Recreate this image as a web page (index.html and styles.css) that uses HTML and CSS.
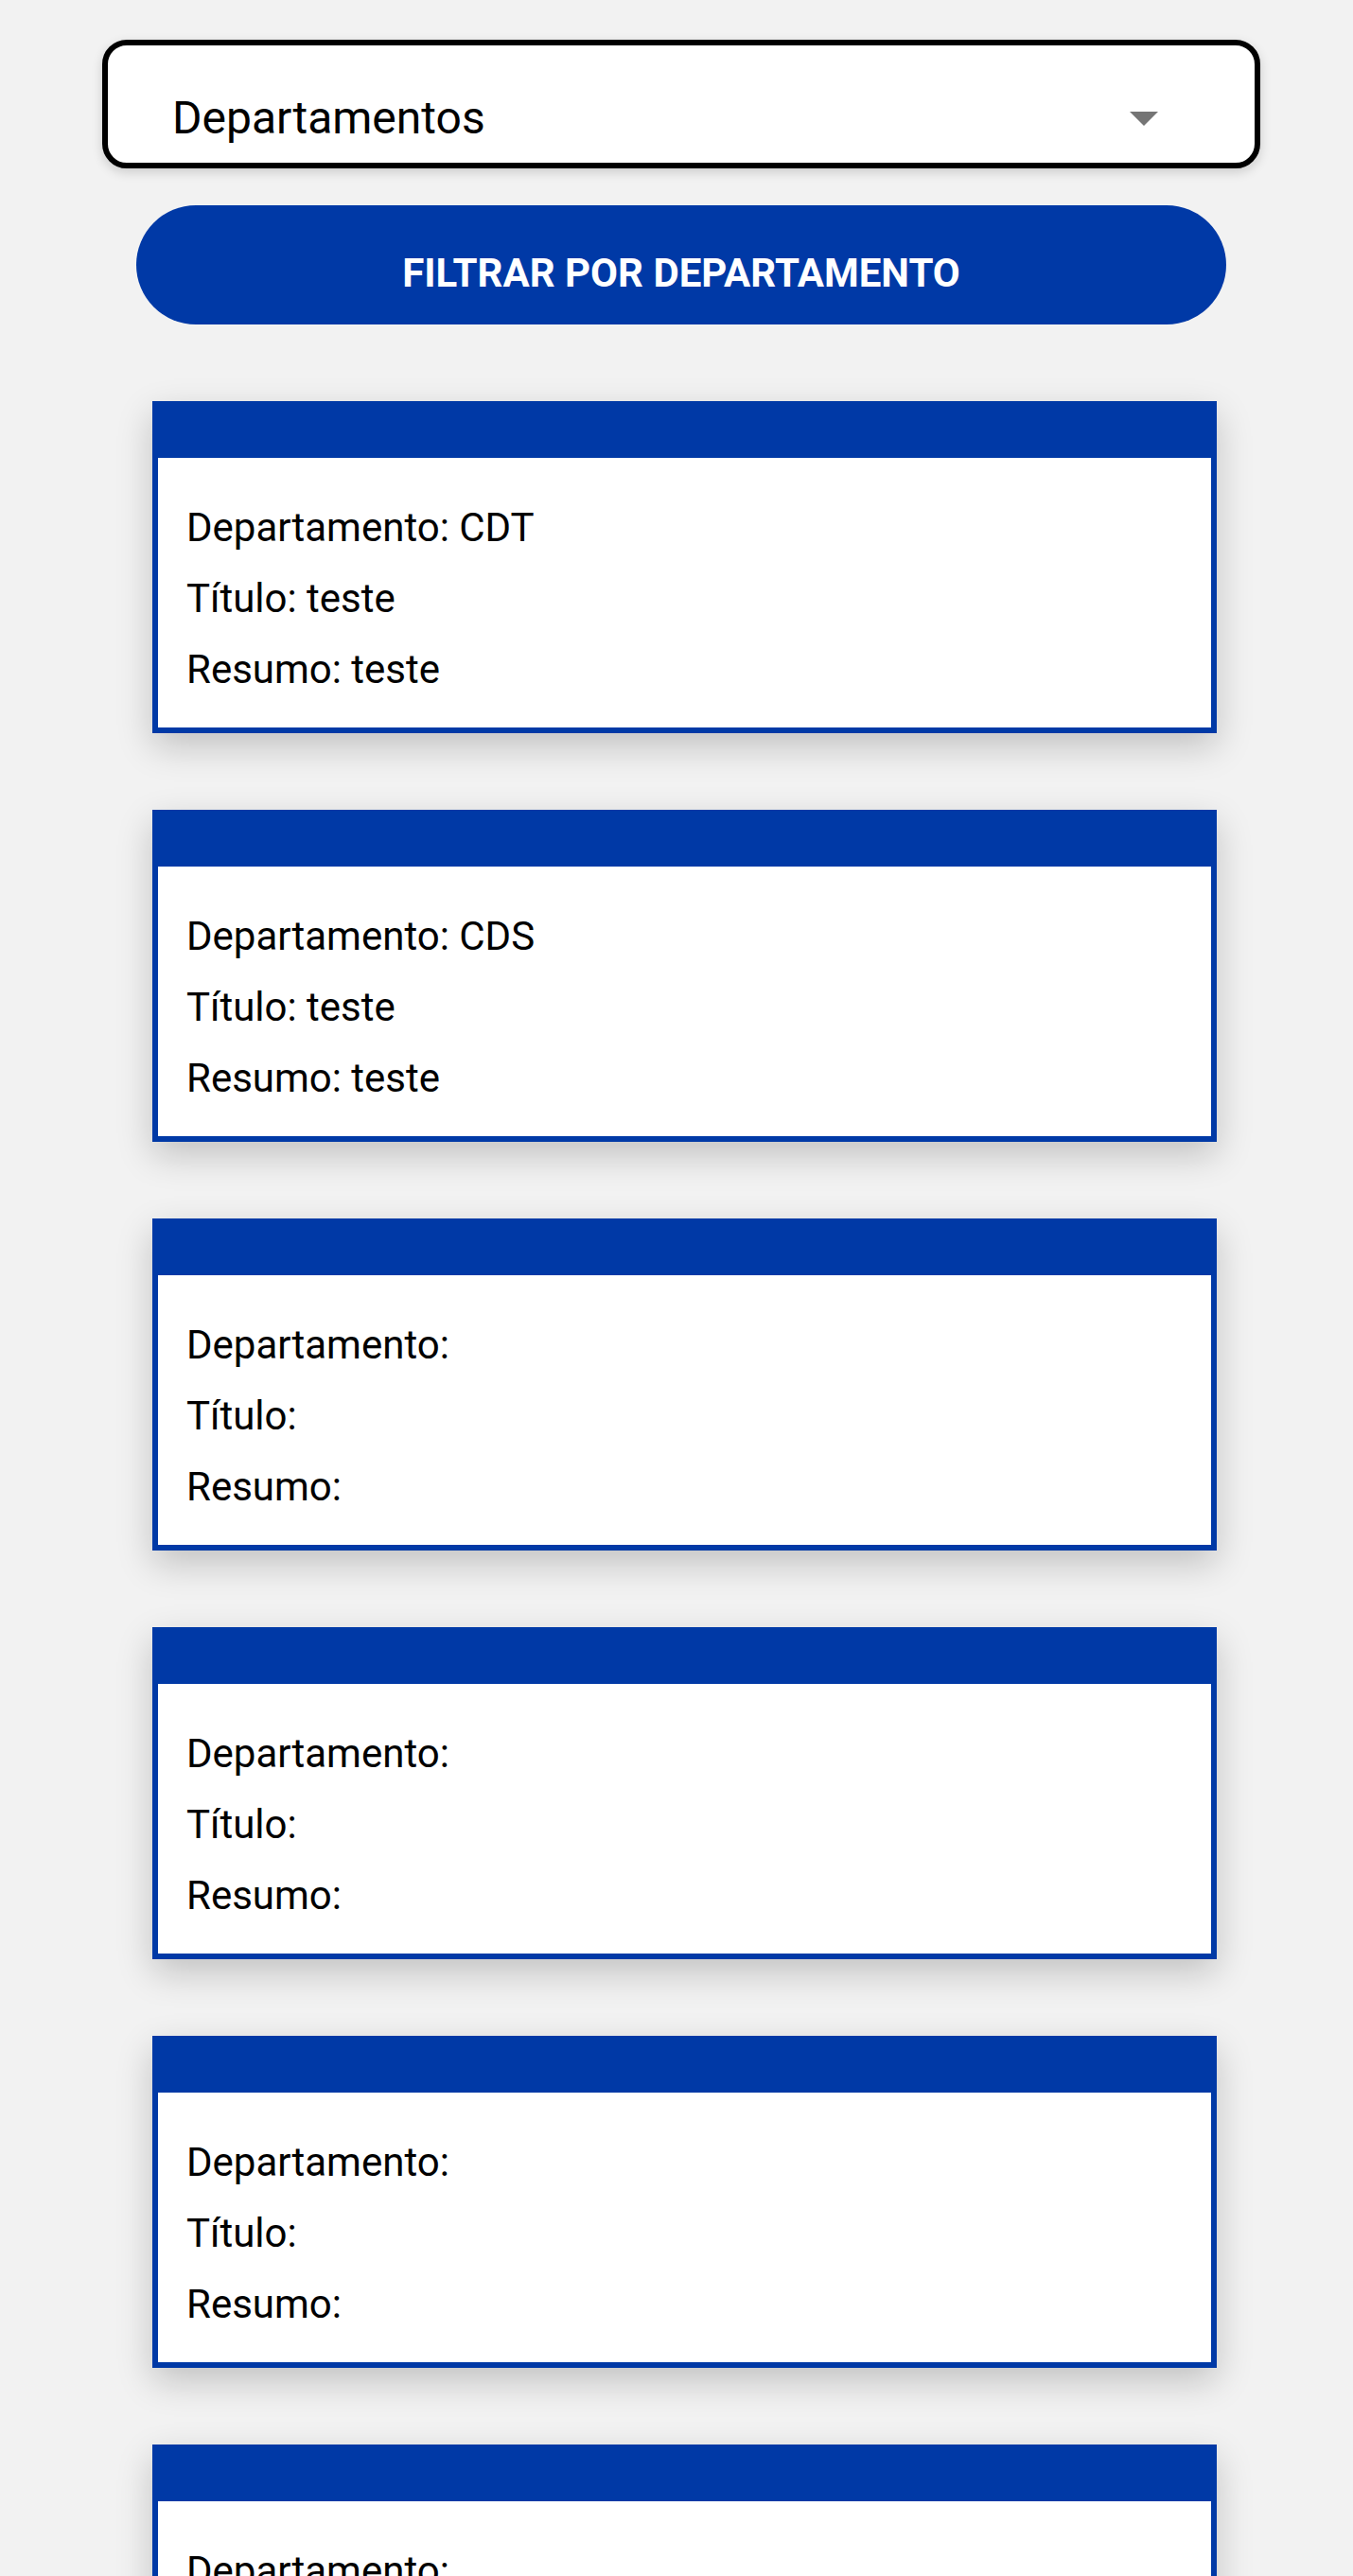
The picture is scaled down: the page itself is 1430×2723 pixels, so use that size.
FILE: index.html
```html
<!DOCTYPE html>
<html lang="pt-BR">
<head>
<meta charset="utf-8">
<title>Departamentos</title>
<link rel="stylesheet" href="styles.css">
</head>
<body>
<main class="page">
  <div class="select">
    <span class="select-label">Departamentos</span>
    <svg class="select-arrow" width="30" height="15" viewBox="0 0 30 15"><path d="M0 0 L30 0 L15 15 Z" fill="#757575"/></svg>
  </div>
  <button class="btn">FILTRAR POR DEPARTAMENTO</button>
  <section class="list">
    <article class="card">
      <div class="card-head"></div>
      <div class="card-body">
        <p>Departamento: CDT</p>
        <p>Título: teste</p>
        <p>Resumo: teste</p>
      </div>
    </article>
    <article class="card">
      <div class="card-head"></div>
      <div class="card-body">
        <p>Departamento: CDS</p>
        <p>Título: teste</p>
        <p>Resumo: teste</p>
      </div>
    </article>
    <article class="card">
      <div class="card-head"></div>
      <div class="card-body">
        <p>Departamento:</p>
        <p>Título:</p>
        <p>Resumo:</p>
      </div>
    </article>
    <article class="card">
      <div class="card-head"></div>
      <div class="card-body">
        <p>Departamento:</p>
        <p>Título:</p>
        <p>Resumo:</p>
      </div>
    </article>
    <article class="card">
      <div class="card-head"></div>
      <div class="card-body">
        <p>Departamento:</p>
        <p>Título:</p>
        <p>Resumo:</p>
      </div>
    </article>
    <article class="card">
      <div class="card-head"></div>
      <div class="card-body">
        <p>Departamento:</p>
        <p>Título:</p>
        <p>Resumo:</p>
      </div>
    </article>
  </section>
</main>
</body>
</html>
```

FILE: styles.css
```css
html, body {
  margin: 0;
  padding: 0;
  background: #f2f2f2;
}

body {
  font-family: Roboto, "Liberation Sans", sans-serif;
  color: #000;
}

.page {
  padding-top: 42px;
  padding-bottom: 60px;
}

.select {
  box-sizing: border-box;
  margin-left: 108px;
  width: 1224px;
  height: 136px;
  border: 6px solid #000;
  border-radius: 26px;
  background: #fff;
  box-shadow: 0 4px 12px rgba(0, 0, 0, 0.16);
  display: flex;
  align-items: flex-start;
  justify-content: space-between;
  padding: 49px 102px 0 68px;
}

.select-label {
  font-size: 48px;
  line-height: 56px;
}

.select-arrow {
  display: block;
  margin-top: 21px;
}

.btn {
  box-sizing: border-box;
  display: flex;
  align-items: center;
  justify-content: center;
  margin: 39px 0 0 144px;
  width: 1152px;
  height: 126px;
  padding: 17px 0 0 0;
  border: none;
  border-radius: 63px;
  background: #0039a6;
  color: #fff;
  font-family: Roboto, "Liberation Sans", sans-serif;
  font-weight: 700;
  font-size: 42px;
  line-height: normal;
}

.list {
  display: flex;
  flex-direction: column;
  gap: 81px;
  margin-top: 81px;
}

.card {
  box-sizing: border-box;
  margin-left: 161px;
  width: 1125px;
  height: 351px;
  border: 6px solid #0039a6;
  background: #fff;
  box-shadow: 0 14px 36px rgba(0, 0, 0, 0.2);
  flex-shrink: 0;
}

.card-head {
  height: 54px;
  background: #0039a6;
}

.card-body {
  padding: 36px 30px 24px 30px;
}

.card-body p {
  margin: 0;
  font-size: 42px;
  line-height: 75px;
}
```
